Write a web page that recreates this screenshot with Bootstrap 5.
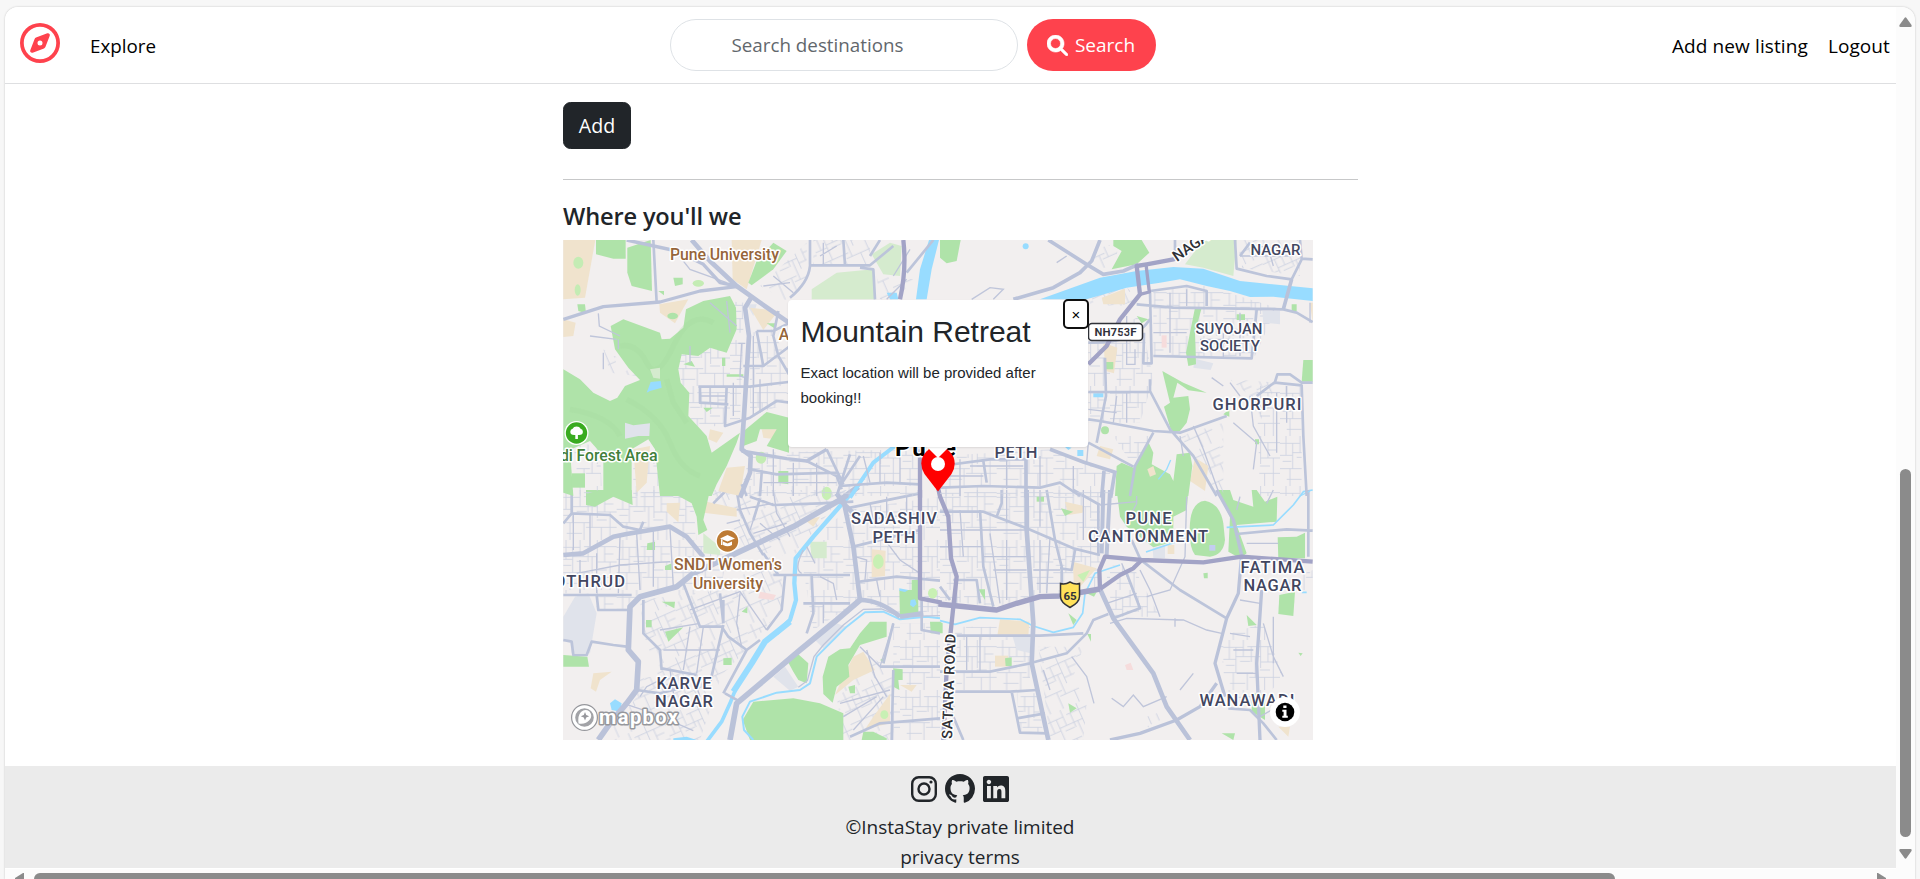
<!DOCTYPE html>
<html lang="en">
<head>
<meta charset="utf-8">
<meta name="viewport" content="width=device-width, initial-scale=1">
<title>InstaStay</title>
<link href="https://cdn.jsdelivr.net/npm/bootstrap@5.3.0/dist/css/bootstrap.min.css" rel="stylesheet">
<style>
  body { font-family: "Open Sans", "Noto Sans", sans-serif; font-size: 19px; background: #f7f7f7; height: 879px; }
  .window { width: 1910px; height: 872px; margin: 7px 0 0 5px; border-radius: 13px 13px 0 0; box-shadow: 0 0 2px #bbb; }
  .viewport { width: 1891px; height: 861px; }
  .topbar { height: 77px; border-bottom: 1px solid #dedfe1; padding: 0 6px 0 15px; }
  .topbar a { color: #000; text-decoration: none; line-height: 30px; padding-top: 2px; }
  .topbar .explore { margin-left: 30px; font-size: 18.8px; }
  .topbar .account { gap: 20px; letter-spacing: .1px; }
  .brand { width: 40px; height: 40px; margin-top: -5px; }
  .search-form { gap: 9px; margin-left: -38px; }
  .search-box { width: 348px; height: 52px; border-radius: 26px; border: 1px solid #dee2e6; padding: 0 0 0 61px; font-size: 18.8px; }
  .search-box::placeholder { color: #62676c; }
  .btn-search { width: 129px; height: 52px; border-radius: 26px; background: #fe424d; color: #fff; font-size: 19px; padding: 1px 0 0; gap: 7px; }
  .doc { width: 1910px; }
  .listing { width: 795px; margin-left: 558px; padding-top: 18px; }
  .btn-add { width: 68px; height: 47px; border-radius: 7.5px; font-size: 19.6px; padding: 1px 0 0; }
  .rule { margin: 30px 0 20px; height: 1px; background: #c7c8c9; }
  .where { font-size: 23.6px; font-weight: 600; line-height: 30px; margin: 0; padding: 1px 0 9px; color: #212529; letter-spacing: -.15px; }
  .map-box { width: 750px; height: 500px; }
  .map-box svg.tiles { display: block; }
  .popup { left: 225px; top: 60px; width: 300px; height: 147px; border-radius: 4px; background: #fff; padding: 13px 12.5px; font-family: "Liberation Sans", Arial, sans-serif; color: #212529; box-shadow: 0 1px 2px rgba(0,0,0,.1); }
  .popup h2 { font-size: 30px; line-height: 37px; font-weight: 400; margin: 0 0 10px; white-space: nowrap; }
  .popup p { font-size: 15px; line-height: 25px; margin: 0; }
  .popup-close { right: -1px; top: -1px; width: 26px; height: 30px; border: 2px solid #101010; border-radius: 5px; background: #fff; line-height: 25px; font-size: 15px; text-align: center; padding: 0; }
  .foot { margin-top: 26px; height: 102px; background: #ebebeb; color: #212529; padding-top: 8px; }
  .foot .icons { gap: 8px; height: 30px; }
  .foot .line { line-height: 30px; position: relative; }
  .foot .first { margin-top: 9px; }
  .vbar { width: 19px; background: #fcfcfc; padding: 10px 0; border-top-right-radius: 13px; }
  .vthumb { width: 11px; height: 368px; border-radius: 6px; background: #8b8b8b; margin-top: 442px; margin-bottom: 12px; }
  .hbar { height: 11px; background: #fcfcfc; padding: 4px 29px 0 10px; }
  .hthumb { width: 1581px; height: 12px; border-radius: 6px 6px 0 0; background: #8b8b8b; margin-left: 10px; }
  /* map layers */
  .tiles path, .tiles ellipse { fill: none; }
  .tiles .urban path { fill: url(#streets); }
  .tiles .urban path.alt { fill: url(#streetsTilted); }
  .tiles .green path, .tiles .green ellipse { fill: #afe3a9; }
  .tiles .pale path { fill: #d5ebce; }
  .tiles .sand path { fill: #f0e3cd; }
  .tiles .block path { fill: #e0e3eb; }
  .tiles .water path { fill: #98dcff; }
  .tiles .stream path { stroke: #98dcff; stroke-linejoin: round; }
  .tiles .thin path { stroke: #bfc5da; stroke-width: 4; }
  .tiles .mid path { stroke: #bcc4da; stroke-width: 8; stroke-linejoin: round; }
  .tiles .wide path { stroke: #bac2d9; stroke-width: 14; stroke-linejoin: round; }
  .tiles .highway path { stroke: #a2a3c6; stroke-width: 13; stroke-linejoin: round; }
  .tiles text { font-family: Roboto, sans-serif; font-weight: 500; paint-order: stroke; stroke: #fff; stroke-width: 3px; stroke-linejoin: round; }
  .tiles .area-name text { fill: #42465f; font-size: 16.5px; text-anchor: middle; }
  .tiles .poi text { fill: #96653a; font-size: 16px; text-anchor: middle; }
</style>
</head>
<body class="overflow-hidden m-0">
<div class="window bg-white d-flex flex-column overflow-hidden">
  <div class="d-flex">
    <div class="viewport overflow-hidden">
      <nav class="topbar d-flex align-items-center bg-white position-relative">
        <svg class="brand flex-shrink-0" viewBox="0 0 512 512" fill="#fe424d"><path d="M464 256A208 208 0 1 0 48 256a208 208 0 1 0 416 0zM0 256a256 256 0 1 1 512 0A256 256 0 1 1 0 256zm306.700 69.100L162.400 380.600c-19.400 7.500-38.500-11.600-31-31l55.500-144.300c3.300-8.500 9.900-15.100 18.400-18.400l144.300-55.500c19.400-7.500 38.500 11.600 31 31L325.100 306.700c-3.200 8.500-9.900 15.100-18.400 18.400zM288 256a32 32 0 1 0-64 0 32 32 0 1 0 64 0z"/></svg>
        <a href="#" class="explore">Explore</a>
        <form class="search-form d-flex position-absolute top-0 start-50 translate-middle-x mt-2 pt-1">
          <input class="search-box form-control" placeholder="Search destinations">
          <button type="button" class="btn btn-search flex-shrink-0 d-flex align-items-center justify-content-center"><svg width="21" height="21" viewBox="0 0 512 512" fill="#fff"><path d="M416 208c0 45.900-14.900 88.300-40 122.700L502.600 457.400c12.500 12.500 12.500 32.800 0 45.300s-32.800 12.500-45.300 0L330.700 376c-34.400 25.200-76.800 40-122.700 40C93.100 416 0 322.900 0 208S93.100 0 208 0S416 93.100 416 208zM208 330a122 122 0 1 0 0-244 122 122 0 1 0 0 244z" stroke="#fff" stroke-width="14"/></svg><span>Search</span></button>
        </form>
        <div class="account ms-auto d-flex"><a href="#">Add new listing</a><a href="#">Logout</a></div>
      </nav>

      <div class="doc">
        <main class="listing">
          <button class="btn btn-dark btn-add d-block">Add</button>
          <div class="rule"></div>
          <h4 class="where">Where you'll we</h4>
          <div class="map-box position-relative">
            <svg class="tiles" width="750" height="500" viewBox="0 0 750 500">
              <defs>
                <pattern id="streets" width="170" height="150" patternUnits="userSpaceOnUse"><path d="M0 22H60M72 20H170M0 58H38M38 50H112M112 66H170M0 98H90M78 112H170M20 130H66M18 0V58M38 22V98M60 0V50M84 20V66M96 50V112M112 0V84M134 20V66M150 66V150M72 98V150M30 98V150M124 112V150M50 64H80M134 42H160M8 76H34M110 90H140" style="stroke:#cdd1e1;stroke-width:2.500"/></pattern>
                <pattern id="streetsTilted" width="170" height="150" patternUnits="userSpaceOnUse" patternTransform="rotate(-24)"><path d="M0 22H60M72 20H170M0 58H38M38 50H112M112 66H170M0 98H90M78 112H170M18 0V58M38 22V98M60 0V50M84 20V66M96 50V112M112 0V84M134 20V66M150 66V150M72 98V150M30 98V150M124 112V150M50 64H80M134 42H160" style="stroke:#cdd1e1;stroke-width:2.500"/></pattern>
              </defs>
              <rect width="750" height="500" fill="#f2efef"/>

              <!-- south-west -->
              <g transform="translate(-3 250) scale(.33333)">
                <g class="urban"><path d="M10 0H350L400 50 410 150 500 200 480 310 230 320 200 360H110V310H10z"/><path class="alt" d="M240 330 480 300 660 180 670 350 560 480 480 560 450 600 310 600 250 430z"/><path class="alt" d="M450 0H860L700 200 560 180z"/><path d="M720 180 860 60 1140 20V380L1000 370 900 330 760 420z"/><path class="alt" d="M830 620 930 500 1000 540V750H850z"/><path d="M1000 400H1140V750H1000z"/><path class="alt" d="M240 560 480 570 420 750H130L230 620z"/></g>
                <g class="block"><path d="M45 320 85 310 110 370 95 460 90 490H35L30 450 10 455V380z"/><path d="M765 450 830 400 862 412 790 475z"/><path d="M640 560 675 530 715 590 690 602z"/></g>
                <g class="pale"><path d="M430 130 480 170 480 195 430 190z"/><path d="M750 155H800V205H755z"/></g>
                <g class="sand"><path d="M440 35 530 55V80L430 68z"/><path d="M320 40 360 38 355 97 320 65z"/><path d="M100 550 155 545 120 570 108 605 92 595z"/><path d="M880 500 910 485 945 540 880 570 825 615 845 570z"/><path d="M935 178 977 182 975 258 935 262z"/><path d="M940 680 990 612V700L915 718z"/><path d="M735 90 780 80 760 110z"/><path d="M1020 585 1070 585 1055 605z"/><path d="M600 305 648 315 640 330 595 325z" style="fill:#f6dcdc"/></g>
                <g class="green"><path d="M78 0H215L218 45 160 20 105 50 78 45z"/><path d="M355 0H450L430 90 442 120 415 135 410 80 395 40 350 15z"/><path d="M10 495 82 500 87 530H10z"/><path d="M548 690 580 635 700 625 780 640 850 670V750H570z"/><path d="M682 512 710 488 745 520 740 580 715 570 700 545z"/><path d="M788 560 805 500 840 478 870 475 900 430 930 395 980 395 980 440 900 465 865 525 868 560 830 590 818 638 790 612z"/><path d="M1018 300 1055 300 1055 270 1075 270V370L1020 383z"/><path d="M910 725 940 725 980 745V750H905z"/><path d="M1000 535 1028 538V570H1015L1018 600 1000 590z"/><path d="M1110 395 1140 395V430H1112z"/><path d="M262 160 285 155V180H260z"/><path d="M258 390 275 390V412H258z"/><path d="M305 335 345 335 343 355z"/><path d="M315 425 370 412 325 455z"/><path d="M490 505 515 503V525H490z"/><path d="M545 365 562 350 562 370z"/><path d="M865 590 885 585V610H870z"/><path d="M315 228 335 220V240H315z"/><path d="M960 510 975 500V520z"/><ellipse cx="955" cy="215" rx="16" ry="22" style="fill:#c8f0b4"/><ellipse cx="800" cy="10" rx="15" ry="20" style="fill:#c8f0b4"/><ellipse cx="1118" cy="310" rx="14" ry="16" style="fill:#c8f0b4"/><ellipse cx="973" cy="674" rx="12" ry="13" style="fill:#c8f0b4"/></g>
                <g class="water"><path d="M150 640 165 628 185 640 180 665 155 660z"/><path d="M340 745 380 740 410 750H340z"/><path d="M1052 330 1065 328 1070 342 1060 352 1050 345z"/><path d="M1018 295 1045 300 1035 306 1018 302z"/></g>
                <g class="stream"><path d="M882 0 830 60 760 140 707 205 703 280 708 330 690 390 650 430" style="stroke-width:13"/><path d="M690 395 615 455 575 520 520 605" style="stroke-width:18"/><path d="M530 590 510 640 485 695 440 755" style="stroke-width:11"/><path d="M1140 385 1100 380 1020 388 970 365 915 367 860 410 800 470 770 500 750 580 720 600 650 608 570 635 547 680 552 720 580 750" style="stroke-width:6"/></g>
                <g class="thin"><path d="M1140 377 1020 380 965 357 910 358 850 405 790 465 762 500 742 572 715 592"/><path d="M600 30 570 120M640 0 650 70 690 140M500 100 540 90M730 180Q700 240 725 250M740 170 765 220M530 60 640 40M580 130 680 100M600 100 660 150M780 260 820 280 830 330M790 340V400M930 40 940 90M980 20V80M1040 20V70M870 95 1080 70M960 130 1020 210 1080 250M885 200 920 210 915 270M950 270 960 320M900 470 960 530M1000 400 960 530M920 480 945 560 980 620M840 640 990 600M850 680 950 620M880 720 970 620"/><path d="M50 250 180 225 330 215M40 70V180M90 75V170M180 140 175 310M230 130 240 300M280 120V290M330 115 340 290M60 210V310M110 190V310M390 360 540 305 620 420M540 310 530 400 545 470M300 420 420 400M310 480H480M390 410 370 540M430 410 410 550M190 640 280 670 400 722M240 620 260 590 320 560M330 540 345 640M400 560 420 620"/></g>
                <g class="mid"><path d="M35 0V70L150 75 190 110 240 120 250 95M10 315H215M110 315 115 360H205M530 0 540 60 570 130 610 195M600 25 580 90M370 280 420 410H485L505 440 560 480 600 450M490 330V400M480 310 490 400M620 420 665 360 675 258M640 255H870M655 255 610 190M755 255 760 370 740 430M730 340H870M250 330V430L300 480 305 540M305 535 410 555M490 405 450 580M570 20 640 45 780 40 880 35M860 55 1080 10M880 170 1080 120M900 275 1010 260 1140 272M960 530H1140M1085 325V420L1140 430M1000 540 995 750M870 740 960 700 1140 685M1000 400 970 520M495 610 540 635M560 480 490 610M230 600 300 610 380 590M500 0 460 40M10 100 35 70M10 450 35 455 40 495H80L95 455 160 465 200 470"/></g>
                <g class="wide"><path d="M895-10 840 30 700 110 560 175 400 250 350 290 240 320 210 350 205 480 235 515 230 600 200 640 150 700 115 750" style="stroke-width:17"/><path d="M10 195 70 190 160 140 200 132 330 110 380 140 430 200"/><path d="M850 30 880 170 900 330Q960 330 1020 380"/><path d="M900 330 830 390 720 480 590 590 530 640 510 750" style="stroke-width:17"/><path d="M840 30 880 70M830 10 850 40M1020 380 1090 370"/></g>
                <g class="highway"><path d="M1080 0V325L1145 338"/></g>
              </g>

              <!-- south-east -->
              <g transform="translate(377 250) scale(.33333)">
                <g class="urban"><path d="M0 0H480V290L170 350 0 330z"/><path d="M45 410H270V600H50z"/><path class="alt" d="M295 470 430 470 400 560 440 640 430 750H330z"/><path d="M495 225 580 230 660 380H520z"/><path d="M840 440 970 400 1030 560 960 640H860z"/><path d="M230 610H290L310 730H240z"/><path d="M970 300 1118 240V300z"/><path class="alt" d="M590 690 680 660 640 720z"/><path d="M0 600H45V700H0z"/></g>
                <g class="block"><path d="M218 440H272V490L230 480z"/><path d="M638 175 675 165V205H640z"/></g>
                <g class="sand"><path d="M398 215 470 235 420 290 402 285z"/><path d="M180 388 268 395 265 437H172z"/><path d="M375 35 432 48 428 68 385 75z"/><path d="M165 497H205V530H165z"/><path d="M1015 710H1050L1045 740z"/><path d="M683 165H703V192H683z"/><path d="M555 525 572 518 580 540 560 540z" style="fill:#f6dcdc"/></g>
                <g class="green"><path d="M530 0H745L740 60 700 80V155L640 172 560 110 540 80z"/><path d="M830 0H870L880 30 940 50 935 0H950L975 35 1012 20 1010 95 890 105 920 190 900 205 865 185 870 80z"/><path d="M750 100Q755 35 795 32 840 40 850 100L855 150Q850 195 810 200L765 195Q745 170 750 100z" style="stroke:#f2efef;stroke-width:14;paint-order:stroke"/><path d="M1013 142 1070 140 1095 128V205H1015z"/><path d="M1018 315 1065 305 1060 378 1015 372z"/><path d="M920 375 950 405 925 408z"/><path d="M935 608 975 615V690L935 665z"/><path d="M363 55 400 65 375 78z"/><path d="M115 298H135V330z"/><path d="M385 370 410 390 400 405z"/><path d="M385 640 410 655 390 668z"/><path d="M195 505 215 502V528H197z"/><path d="M442 432 453 432V455z"/><path d="M790 250 803 248V265H792z"/><path d="M845 730 885 730 880 750z"/><path d="M1075 488 1088 490 1082 498z"/><path d="M290 20H312V35H290z"/><path d="M440 310 470 306 462 320z"/><path d="M0 395 8 400V430H0z"/><path d="M412 255 450 240 430 275z" style="fill:#c8f0b4"/></g>
                <g class="block"><path d="M808 165H826V182H808z" style="fill:#c3cdf0"/></g>
                <g class="stream"><path d="M0 392 45 403 120 383 240 388 280 408 340 427 400 412 428 370 435 310 465 250 540 225M618 186 705 157M860 112 1000 105 1060 45 1090 5 1118 0M1085 307H1100" style="stroke-width:5"/></g>
                <g class="thin"><path d="M60 60 70 200M0 120H255M50 270V345M120 440V545M80 440V540M510 400 560 385 730 390 800 420 845 430M395 500 440 560 462 640M740 20 735 200 690 300 620 320M590 0V40L560 100M515 625 550 650 580 615 610 650 680 620M430 0 430 150M300 0V110M200 0V100M300 150V310M330 140 320 310M200 150V330M150 130 180 340M0 170H130M130 200H260M160 240H260M280 240H360M290 280H365M545 220 600 350M500 340 590 310M600 240 630 300 660 380M900 330 960 340M870 430 930 440M880 480H940M890 550H950M970 400 1000 500 1030 560M1000 380V520M705 385V410M310 540 330 600M720 600 760 550M900 20 890 60M1015 160H920M1000 0 980 40M480 45 590 35M960 680 1030 640"/></g>
                <g class="mid"><path d="M0 65H130L260 115 400 175 480 195M520 385 600 355 560 250M320 0 345 150 365 230V280M405 180 395 240 360 235M120 60 130 230 160 350M40 270H110L120 340M170 80 185 40V0M400 0 480 45M50 437H300L430 430M505 372 460 390 440 430 380 490 270 520 150 545H0M45 605H210L290 600M215 605 240 728 325 730M230 685 315 670M0 290 30 330M890 132 1040 118 1118 122M1105 0V200M865 655 930 660 970 700 1010 750M40 680 70 750M605 212 720 300 860 385M575 150 600 205M475 45V190"/></g>
                <g class="wide"><path d="M260 0V120L280 400 275 520 325 750"/><path d="M490 0 485 190M510 0 500 195" style="stroke-width:12"/><path d="M480 297 520 385 640 550 680 650 750 750"/><path d="M830 0 880 90 905 195 895 310 860 385 825 520 855 620M965 300 950 520 960 750M830 580 780 650 710 690 600 730 510 750" style="stroke-width:10"/></g>
                <g class="highway"><path d="M-5 342 170 360 230 340 300 320 360 318 480 297" style="stroke-width:16"/><path d="M480 297 540 255 580 235 605 210M480 297 478 240 495 200 605 210 790 217 905 200 1118 215M-6-8 0 20 25 80 33 205 50 260 40 350 20 540 10 750"/></g>
              </g>

              <!-- north-west -->
              <g transform="translate(-3 -4) scale(.33333)">
                <g class="urban"><path d="M370 330 550 310 540 550 430 580 395 560 350 380z"/><path d="M570 290 640 280 690 400V500L570 540z"/><path d="M570 650 1080 640V780H540z"/><path class="alt" d="M600 150 740 20 740 120 690 200z"/><path class="alt" d="M760 12H930V85H760z"/><path class="alt" d="M130 340 180 370 230 420 150 410z"/><path d="M40 620 120 630 125 760 60 780z"/><path d="M220 650 290 660 300 780H220z"/><path d="M460 190 550 200 550 290 530 290z"/><path class="alt" d="M950 120 1060 130 1010 190H960z"/></g>
                <g class="block"><path d="M560 205 590 205 580 240z"/></g>
                <g class="pale"><path d="M755 160 830 110 940 100 945 190H755z"/><path d="M935 55 990 20 1025 30 1020 120 970 115z"/></g>
                <g class="sand"><path d="M10 12H106L75 185 10 190z"/><path d="M10 250 47 260 40 300 10 303z"/><path d="M515 12H605L560 160 518 130z"/><path d="M298 205 385 190 345 262 300 230z"/><path d="M570 215 655 225 610 282z"/><path d="M475 765 500 695 555 690 540 780z"/><path d="M450 580 490 590 470 620 445 610z"/><path d="M220 640 270 630 260 740 230 770z"/><path d="M605 580 655 580 645 610 610 605z"/></g>
                <g class="green"><path d="M108 12H197V68H160L108 55z"/><path d="M202 35 272 12 276 165 215 150 202 110z"/><path d="M10 400 60 430 100 470 150 495 172 485 195 450 240 432 205 395 165 340 152 270 190 250 300 290 305 310 330 308 370 275 378 220 430 195 510 180 528 215 530 280 500 350 450 335 415 360 365 355 355 400 362 440 388 470 385 540 440 600 455 650 540 590 530 620 500 690 470 745 455 780H300L285 640 265 610 215 640 215 780H130L130 660 90 615 10 650z"/><path d="M545 590 620 528 687 545V650L620 630 650 580 600 580 590 615 550 630z"/><path d="M565 140 590 75 640 20 680 45 640 100 575 148z"/><path d="M10 770 10 680 30 640 40 780z"/><path d="M35 712 75 712V755H35z"/><path d="M340 125H368V145L345 150z"/><path d="M295 165H312V178z"/><path d="M52 205 75 205 78 232 55 225z"/><path d="M655 705 685 705V745L655 740z"/><path d="M620 262H648V280z"/><ellipse cx="338" cy="240" rx="16" ry="10"/><path d="M486 365H496V390H486zM500 415H550V422H500zM370 385 395 375 405 392zM430 515 458 515 440 528z"/><ellipse cx="55" cy="80" rx="15" ry="18" style="fill:#c4ecb4"/><ellipse cx="53" cy="162" rx="9" ry="17" style="fill:#c4ecb4"/><ellipse cx="415" cy="142" rx="17" ry="10" style="fill:#c4ecb4"/><ellipse cx="603" cy="665" rx="16" ry="18" style="fill:#c4ecb4"/></g>
                <path d="M200 490Q300 540 330 620T420 720M180 330Q230 320 260 380T340 330 460 260M30 520Q150 540 180 600M320 430 340 500 380 560" style="stroke:#a4daa0;stroke-width:16;opacity:.3"/>
                <g class="block"><path d="M195 560 220 568 270 562 268 600 235 600 195 608z"/></g>
                <g class="water"><path d="M1107 12H1137L1115 100 1100 190H1068L1080 100z"/><path d="M980 170 1010 170 1015 190H990z"/><path d="M260 470 272 438 302 435 305 455 270 465z"/></g>
                <g class="pale"><path d="M270 400 300 395 300 428 280 425z"/></g>
                <g class="stream"><path d="M1005 630 940 680 900 740 870 785" style="stroke-width:12"/></g>
                <g class="thin"><path d="M115 232 118 270 180 300M90 300 170 310M175 310V340M500 195 510 290M450 200 530 270M545 320 540 420 555 425M535 322H556M580 300V540M600 430V530M520 440V540M450 450V500M420 480H500M390 330V380M130 350V400M640 640V780M700 680V780M770 680V780M610 740H830M910 660 930 740M960 650V740M1020 650V745M350 50 390 100 500 140M780 60 830 30M790 20V85M640 120 700 170M610 150 690 140M980 190 1040 130M1050 40 1000 120"/></g>
                <g class="mid"><path d="M280 12 290 200M750 12V90Q745 140 690 185M750 88H930L1000 30M850 12 855 88M900 95 940 100 945 190M1120 12 1040 110M415 452H570L685 438M420 450V500L505 505M500 452 495 570 570 545 650 495 690 500M590 285 610 390H550M590 285H640L690 260M655 225 640 300 655 360 690 420M690 330 610 390M570 700 650 715 830 710M740 675 830 720 845 760M870 655 830 780M800 640 850 745M900 660 840 750 980 740 1080 745M605 710 600 780M545 745 560 780M960 12 930 60"/></g>
                <g class="wide"><path d="M395 12 450 75 530 150 600 200 690 262"/><path d="M200 12 350 45 430 85 480 140 530 150" style="stroke-width:10"/><path d="M10 250 130 212 300 198 420 165 530 152" style="stroke-width:10"/><path d="M575 182 555 215 567 300 552 540 545 640 572 660 570 710 540 785"/><path d="M545 645 680 668 740 675 800 640" style="stroke-width:10"/></g>
                <g class="highway"><path d="M1030 12Q1040 100 1020 190"/><path d="M1080 640V785"/></g>
              </g>

              <!-- north-east -->
              <g transform="translate(377 -4) scale(.33333)">
                <g class="urban"><path class="alt" d="M450 180 555 150 600 190 540 210 450 205z"/><path d="M640 160 800 150 1010 215 945 360H640z"/><path class="alt" d="M895 12H1080V120L900 95z"/><path d="M445 320 600 240 640 430 600 560 445 560z"/><path class="alt" d="M870 430 1010 440 960 560 930 480z"/><path d="M950 450H1085V780H960z"/><path d="M0 660 330 640 520 710V780H0z"/><path class="alt" d="M460 40 540 20 520 90 470 100z"/><path class="alt" d="M720 600 850 560V770H830z"/><path d="M520 600 640 600 580 690z"/></g>
                <g class="block"><path d="M967 225H1020V265L970 260z"/><path d="M765 368 820 382 812 402 760 395z"/></g>
                <g class="pale"><path d="M735 85 790 12H890L880 120 790 95z"/></g>
                <g class="sand"><path d="M485 185 555 158V205H490z"/><path d="M490 320 532 335 522 412 497 405z"/><path d="M765 665 805 690 795 765 750 735z"/><path d="M480 630 520 640 510 670 470 660z"/><path d="M1110 200H1118V260z"/><path d="M665 298H680V335H665z" style="fill:#f6dcdc"/></g>
                <g class="green"><path d="M0 12H62L50 75 20 82 0 65z"/><path d="M515 100 545 45 520 30 520 12H605L628 50 590 85z"/><path d="M765 215H785L765 290 768 385 745 390 738 350z"/><path d="M667 405 730 440 800 470 745 463 712 440 700 485 745 480 750 520 740 560 720 585 695 590 672 512 690 500z"/><path d="M530 690 545 680 580 695 625 618 640 650 635 685 690 715 700 735 710 655 750 650 757 690 745 780H525z"/><path d="M1090 372H1118V437H1085z"/><path d="M850 535 868 520V542zM945 610H957V625H945zM890 235H915V252H890zM1055 205H1070V225H1055z"/><path d="M590 240 625 250 605 262zM495 378H520V400H497z"/><ellipse cx="495" cy="583" rx="12" ry="12"/></g>
                <g class="sand"><path d="M622 700 640 690 648 715 630 722z"/></g>
                <g class="water"><path d="M300 190 480 125 590 105 700 93 790 98 900 135 1118 157V195L1000 182 930 183 870 165 800 150 720 130 660 140 560 155 440 190z"/><path d="M460 472H490V484H460zM372 630 395 635 385 642zM412 642H430V660H412z"/><ellipse cx="257" cy="31" rx="9" ry="9" style="fill:#98dcff"/></g>
                <g class="stream"><path d="M692 672 680 700 655 730M1080 780 1110 765" style="stroke-width:4"/></g>
                <g class="thin"><path d="M95 190 150 155 190 160 160 190M350 80 380 60M560 240V385H585V340M690 170V350M740 160V210M900 230V360M850 290V365M640 290H740M780 310H945M530 480 520 560M560 470V560M445 520 530 530M720 600 730 660M760 570 790 640 840 780M880 560 950 620 940 700M930 480 940 570 990 660M1010 470V650M1040 450V560M870 440 900 480M815 425 850 450M60 670V780M90 690H250M200 670V760M300 660V750M400 690V770M445 620 440 680M0 720H130M980 20 1000 90M940 30 1060 40M900 60H1060M1110 200V260"/></g>
                <g class="mid"><path d="M612 290 610 382H635L630 165 740 150 800 165V210M590 205 700 215 1030 220 1070 230 1118 258M885 12 890 98 980 120 1055 130 1085 70 1080 12M900 60 930 20M950 222 935 367 640 360M630 430V465L690 580 760 660 830 780M445 468H630M445 550 480 555 640 585 720 590 860 540M495 365 498 480 470 620M640 590 585 690 570 780M445 620 580 692M1118 440H1085L1050 415H1012L1005 438 950 480M1005 440 1085 448 1090 600 1100 780M0 690 150 670H255M0 755 130 750 300 755 360 740 420 780M130 675 140 740M705 12V60M445 320Q580 325 630 250M1118 70 1085 68"/></g>
                <g class="wide"><path d="M220 190 340 155 420 110 455 75 480 12M325 12 440 85 490 115 550 105 595 85" style="stroke-width:11"/><path d="M258 665V785M330 640 430 678 530 710M492 705 485 785M525 705 512 785M1055 130 1030 220" style="stroke-width:11"/></g>
                <g class="highway"><path d="M445 385 500 330 540 250 600 175 590 90 620 85 700 70 790 12"/><path d="M618 85 628 168 600 175" style="stroke-width:10"/></g>
              </g>

              <g class="poi">
                <text x="161.500" y="19.500" textLength="109">Pune University</text>
                <text x="221" y="99.500">A</text>
                <text x="165" y="329.500" textLength="108">SNDT Women's</text>
                <text x="165" y="349" textLength="70">University</text>
                <text x="-3" y="220.500" textLength="97.500" style="fill:#42803c;text-anchor:start">di Forest Area</text>
              </g>
              <g class="area-name">
                <text x="712.500" y="15" textLength="50" style="font-size:15px">NAGAR</text>
                <text x="666" y="93.500" textLength="67" style="font-size:15px">SUYOJAN</text>
                <text x="667" y="111" textLength="60" style="font-size:15px">SOCIETY</text>
                <text x="694" y="169.500" textLength="89">GHORPURI</text>
                <text x="453" y="218" textLength="43">PETH</text>
                <text x="331" y="284" textLength="86">SADASHIV</text>
                <text x="331" y="302.500" textLength="43">PETH</text>
                <text x="585.500" y="283.500" textLength="46">PUNE</text>
                <text x="585" y="301.500" textLength="120">CANTONMENT</text>
                <text x="709.500" y="332.500" textLength="64">FATIMA</text>
                <text x="709.500" y="350.500" textLength="58">NAGAR</text>
                <text x="-9" y="346.500" textLength="71" style="text-anchor:start">OTHRUD</text>
                <text x="121" y="448.500" textLength="55">KARVE</text>
                <text x="121" y="467" textLength="58">NAGAR</text>
                <text x="684" y="465.500" textLength="95">WANAWADI</text>
                <text transform="translate(389 499) rotate(-88)" style="text-anchor:start;fill:#2f3136;font-size:14.500px" textLength="105">SATARA ROAD</text>
                <text transform="translate(614 22) rotate(-35)" style="text-anchor:start;fill:#2f3136;font-size:15px" textLength="50">NAGAR</text>
              </g>
              <text x="332" y="216" textLength="61" style="font-weight:700;font-size:24px;fill:#000">Pune</text>
              <circle cx="13.500" cy="193" r="12" fill="#fff"/><circle cx="13.500" cy="193" r="10.700" fill="#39ab20"/>
              <path d="M12.300 199v-4q-5 .5-5-3.200 0-2.500 2.300-3 1-2.300 4-2.300t4 2.300q2.300.5 2.300 3 0 3.700-5 3.200v4z" style="fill:#fff"/>
              <circle cx="164.500" cy="301" r="12" fill="#fff"/><circle cx="164.500" cy="301" r="10.700" fill="#bd7b35"/>
              <path d="M157 298.500 164.500 295l7.500 3.500-7.500 3zM160 301.500v3.500q4.500 2.500 9 0v-3.500l-4.500 2zM158 299v6h1.500v-5z" style="fill:#fff"/>
              <rect x="525.500" y="83.500" width="54" height="17" rx="3.500" fill="#fff" stroke="#303238" stroke-width="1.500"/>
              <text x="531.500" y="96" textLength="42" style="font-weight:700;font-size:11.500px;fill:#30323c">NH753F</text>
              <path d="M507 342q-5 3-9.500 1.500v13q0 6 9.500 11 9.500-5 9.500-11v-13q-4.500 1.500-9.500-1.500z" style="fill:#ffe15a;stroke:#303238;stroke-width:1.500"/>
              <text x="500.500" y="359.500" textLength="13" style="font-weight:700;font-size:11.500px;fill:#303238;stroke:none">65</text>
              <circle cx="21.500" cy="477.500" r="11" fill="#a2a3a7" stroke="#96979c" stroke-width="5"/><circle cx="21.500" cy="477.500" r="10.800" fill="#a2a3a7" stroke="#fff" stroke-width="3"/>
              <path d="M15.500 483.500q-1-8 2.500-11.500 4-3.500 8.500-.5 3.500 4.500 0 8.500-3.500 4.500-11 3.500z" style="fill:#fff"/><path d="m22 472 1.200 3 3 1.200-3 1.200-1.200 3-1.200-3-3-1.200 3-1.200z" style="fill:#96979c"/>
              <text x="36" y="483.500" textLength="79" style="font-size:20px;font-weight:700;fill:#fff;stroke:#96979c;stroke-width:3px">mapbox</text>
              <circle cx="722" cy="472" r="15" fill="#fff"/><circle cx="722" cy="472" r="9.300"/><path d="M720.300 465.500h3.200v2.600h-3.200zM719.300 469.800h4.200v6h1.300v2h-5.500v-2h1.300v-4h-1.300z" style="fill:#fff"/>
              <ellipse cx="376" cy="250.500" rx="10" ry="4" fill="#000" opacity=".25"/>
              <path d="M375 251.500 361.500 234q-3.200-5-3.200-10.500a16.700 16.700 0 0 1 33.400 0q0 5.500-3.200 10.500z" style="fill:#f00"/><circle cx="375" cy="224" r="7" fill="#fff"/>
              <path d="M362.500 205.500h25L375 218z" style="fill:#fff"/>
            </svg>
            <div class="popup position-absolute">
              <h2>Mountain Retreat</h2>
              <p>Exact location will be provided after booking!!</p>
              <button class="popup-close position-absolute">×</button>
            </div>
          </div>
        </main>
        <footer class="foot d-flex flex-column align-items-center">
          <div class="icons d-flex align-items-center">
            <svg width="26" height="26" viewBox="0 0 26 26" fill="none" stroke="#212529" stroke-width="2.400"><rect x="1.200" y="1.200" width="23.600" height="23.600" rx="6.500"/><circle cx="13" cy="13" r="5.500"/><circle cx="20" cy="6" r="1.600" fill="#212529" stroke="none"/></svg>
            <svg width="30" height="29" viewBox="0 0 16 15.700" preserveAspectRatio="none" fill="#212529"><path d="M8 0C3.580 0 0 3.580 0 8c0 3.540 2.290 6.530 5.470 7.590.4.070.55-.17.55-.38 0-.19-.01-.82-.01-1.490-2.010.37-2.530-.49-2.690-.94-.09-.23-.48-.94-.82-1.130-.28-.15-.68-.52-.01-.53.63-.01 1.080.58 1.230.82.72 1.210 1.870.87 2.330.66.07-.52.28-.87.51-1.070-1.780-.2-3.640-.89-3.640-3.950 0-.87.31-1.590.82-2.150-.08-.2-.36-1.020.08-2.120 0 0 .67-.21 2.200.82.64-.18 1.320-.27 2-.27s1.360.09 2 .27c1.530-1.040 2.200-.82 2.200-.82.44 1.100.16 1.920.08 2.120.51.56.82 1.270.82 2.150 0 3.070-1.870 3.750-3.650 3.950.29.25.54.73.54 1.480 0 1.070-.01 1.930-.01 2.200 0 .21.15.46.55.38A8.010 8.010 0 0 0 16 8c0-4.420-3.580-8-8-8z"/></svg>
            <svg width="26" height="26" viewBox="0 32 448 448" fill="#212529"><path d="M416 32H31.900C14.300 32 0 46.500 0 64.300v383.400C0 465.500 14.300 480 31.900 480H416c17.600 0 32-14.500 32-32.300V64.300c0-17.800-14.400-32.300-32-32.300zM135.400 416H69V202.200h66.500V416zm-33.200-243c-21.300 0-38.500-17.300-38.500-38.500S80.900 96 102.200 96c21.200 0 38.500 17.300 38.500 38.500 0 21.300-17.200 38.500-38.500 38.500zm282.100 243h-66.400V312c0-24.800-.5-56.700-34.500-56.700-34.600 0-39.900 27-39.900 54.900V416h-66.400V202.200h63.700v29.200h.9c8.900-16.800 30.600-34.500 62.900-34.500 67.200 0 79.700 44.300 79.700 101.900V416z"/></svg>
          </div>
          <div class="line first">©InstaStay private limited</div>
          <div class="line">privacy terms</div>
        </footer>
      </div>
    </div>
    <div class="vbar d-flex flex-column align-items-center">
      <svg width="13" height="10" viewBox="0 0 13 10" fill="#8b8b8b"><path d="M5.500 1q1-1.400 2 0L12.500 8q.6 2-1 2H1.500q-1.600 0-1-2z"/></svg>
      <div class="vthumb"></div>
      <svg width="13" height="10" viewBox="0 0 13 10" fill="#8b8b8b"><path d="M5.500 9q1 1.400 2 0L12.500 2q.6-2-1-2H1.500q-1.600 0-1 2z"/></svg>
    </div>
  </div>
  <div class="hbar d-flex">
    <svg width="9" height="12" viewBox="0 0 9 12" fill="#8b8b8b"><path d="M8 0h1v12H4L0 6V5z"/></svg>
    <div class="hthumb"></div>
    <svg class="ms-auto" width="9" height="12" viewBox="0 0 9 12" fill="#8b8b8b"><path d="M1 0H0v12h5l4-6V5z"/></svg>
  </div>
</div>
<script src="https://cdn.jsdelivr.net/npm/bootstrap@5.3.0/dist/js/bootstrap.bundle.min.js"></script>
</body>
</html>
